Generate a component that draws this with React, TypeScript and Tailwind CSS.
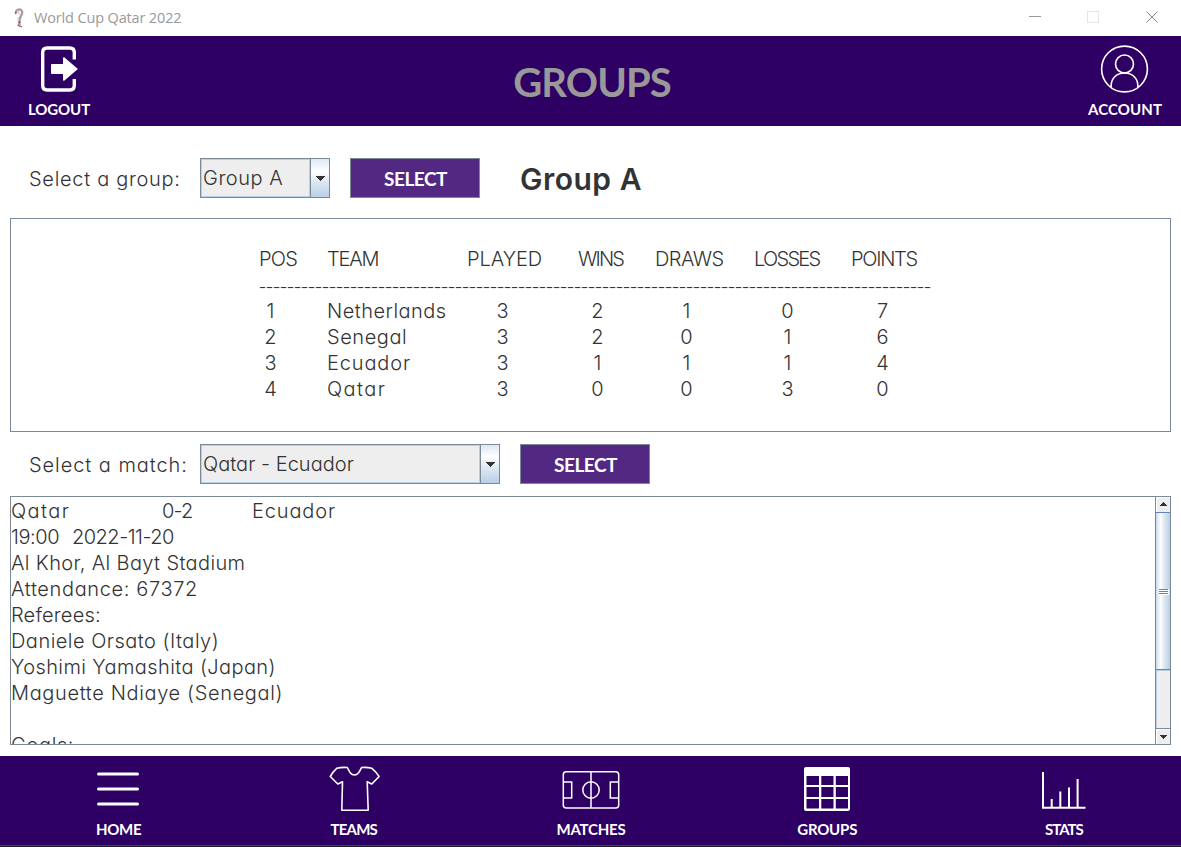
import React from "react";

const light = "font-['Inter',sans-serif] font-light text-[20px] leading-[26px] text-[#333333] [font-feature-settings:'cv11'] whitespace-pre";
const bold = "font-['Lato',sans-serif] font-bold text-white whitespace-nowrap";

function TrophyIcon() {
  return (
    <svg width="10" height="20" viewBox="0 0 10 20" fill="none" className="shrink-0">
      <path d="M2 5C2 .6 8.200 .4 8.200 4.500C8.300 7 6.200 8 6 10.500C6 12 4.800 13 5.200 15.500L6 19" stroke="#a8a3a3" strokeWidth="2.400" />
      <path d="M3.500 2.500L5.500 6.500M1 5.500L3 6M4 9L4.200 13" stroke="#d5d0d0" strokeWidth="1.300" />
      <path d="M1.200 5.500L2.200 4M5 13.500L6.400 15.200M6.600 18L7.600 19.200M3.600 17.600L4.600 16.800" stroke="#8f1f3c" strokeWidth="1.100" />
    </svg>
  );
}

function LogoutIcon() {
  return (
    <svg width="40" height="48" viewBox="39 45 40 48" className="block">
      <path d="M74.300 59.500V52.500Q74.300 48 69.800 48H47.200Q42.700 48 42.700 52.500V85.500Q42.700 90 47.200 90H69.800Q74.300 90 74.300 85.500V79" fill="none" stroke="#fff" strokeWidth="3.400" />
      <path d="M52 64H63V57.800Q63.500 57 64.500 57.600L77.900 69L64.500 80.400Q63.500 81 63 80.200V74H52Q51 74 51 73V65Q51 64 52 64Z" fill="#fff" />
    </svg>
  );
}

function AccountIcon() {
  return (
    <svg width="50" height="50" viewBox="0.500 0 50 50" fill="none" stroke="#fff" strokeWidth="1.600" className="block">
      <circle cx="25" cy="25" r="22.900" />
      <circle cx="25" cy="20" r="9" />
      <path d="M11.600 43.500V42C11.600 34 17.500 29 25 29S38.400 34 38.400 42V43.500" />
    </svg>
  );
}

function HomeIcon() {
  return (
    <svg width="44" height="36" viewBox="0 0 44 36" stroke="#fff" strokeWidth="3" strokeLinecap="round">
      <path d="M2.500 3H41.500M2.500 18H41.500M2.500 33H41.500" />
    </svg>
  );
}

function ShirtIcon() {
  return (
    <svg width="52" height="46" viewBox="329 765 52 46" fill="none" stroke="#fff" strokeWidth="1.600" strokeLinejoin="round">
      <path d="M336.700 767.300Q342 766 347.300 766.500C349.500 771 351 774 354.500 774S359.300 771 361.500 766.500Q367 766 371.900 767.300Q376 770.500 379.100 775.500L371.800 783L367.200 780.700L368.200 809.300H341.800L342.500 780.700L337.800 783L330.300 775.500Q333 770.500 336.700 767.300Z" />
    </svg>
  );
}

function PitchIcon() {
  return (
    <svg width="58" height="40" viewBox="562 770 58 40" fill="none" stroke="#fff" strokeWidth="1.500">
      <rect x="563.300" y="771.700" width="55.400" height="36.300" rx="3" />
      <path d="M591 772V808M563.500 782H571.700V798H563.500M618.500 782H610.300V798H618.500" />
      <circle cx="591" cy="790" r="8.200" />
    </svg>
  );
}

function TableIcon() {
  return (
    <svg width="46" height="44" viewBox="804 767 46 44">
      <path fill="#fff" fillRule="evenodd" d="M806 767H848Q850 767 850 769V809Q850 811 848 811H806Q804 811 804 809V769Q804 767 806 767ZM806.500 776V785H819V776ZM821.300 776V785H833.500V776ZM835.800 776V785H848V776ZM806.500 787V797H819V787ZM821.300 787V797H833.500V787ZM835.800 787V797H848V787ZM806.500 799V808.500H819V799ZM821.300 799V808.500H833.500V799ZM835.800 799V808.500H848V799Z" />
    </svg>
  );
}

function StatsIcon() {
  return (
    <svg width="44" height="38" viewBox="1042 772 44 38" fill="none" stroke="#fff" strokeWidth="2">
      <path d="M1043 772V807.800H1085.500M1051.700 807V799M1060.300 807V791.500M1069 807V787.500M1077.600 807V779" />
    </svg>
  );
}

const navItems = [
  { label: "HOME", text: "tracking-[-0.300px] pl-[1px]", box: "pt-[2px]", icon: <HomeIcon /> },
  { label: "TEAMS", text: "tracking-[-0.800px] pr-[1px]", box: "pt-[2px] pl-[1px]", icon: <ShirtIcon /> },
  { label: "MATCHES", text: "tracking-[-0.200px] pl-[1px]", box: "pt-[4px] pl-[1px]", icon: <PitchIcon /> },
  { label: "GROUPS", text: "tracking-[-0.200px] pl-[1px]", box: "pt-[2px] pl-[1px]", icon: <TableIcon /> },
  { label: "STATS", text: "tracking-[-1.000px] pl-[2px]", box: "pt-[6px] pl-[2px]", icon: <StatsIcon /> },
];

function ComboBox({ value, width, tracking }: { value: string; width: string; tracking: string }) {
  return (
    <div className={`flex h-10 border border-[#7a8a99] ${width}`}>
      <div className="flex flex-1 items-center border border-[#b8cfe5] bg-[#eeeeee] pl-[1px]">
        <span className={`${light} ${tracking}`}>{value}</span>
      </div>
      <div className="flex w-[19px] items-center justify-center border-l border-[#7a8a99] bg-[linear-gradient(#dde8f3_0%,#ffffff_32%,#dde8f3_60%,#b8cfe5_100%)] pr-[1px] pt-[1px]">
        <svg width="10" height="5" viewBox="0 0 10 5" shapeRendering="crispEdges"><path d="M0 0H10L5 5Z" fill="#333" /></svg>
      </div>
    </div>
  );
}

function SelectButton() {
  return (
    <button className={`${bold} ml-5 flex h-10 w-[130px] items-center justify-center border border-[#7a8a99] bg-[#522882] pl-[1px] pt-[2px] text-[19px] tracking-[-0.500px]`}>SELECT</button>
  );
}

const rows = [
  ["1", "Netherlands", "3", "2", "1", "0", "7"],
  ["2", "Senegal", "3", "2", "0", "1", "6"],
  ["3", "Ecuador", "3", "1", "1", "1", "4"],
  ["4", "Qatar", "3", "0", "0", "3", "0"],
];
const headings = ["POS", "TEAM", "PLAYED", "WINS", "DRAWS", "LOSSES", "POINTS"];
const headTracking = ["tracking-[-0.700px]", "tracking-[-1.200px]", "tracking-[-0.060px]", "tracking-[-1.800px]", "tracking-[-0.560px]", "tracking-[-1.720px]", "tracking-[-1.280px]"];
const teamTracking = ["tracking-[0.480px]", "tracking-[0.560px]", "tracking-[0.850px]", "tracking-[1.400px]"];
const indents = ["pl-[1.5px]", "", "pl-[25.5px]", "pl-[9.5px]", "pl-[21.5px]", "pl-[23.5px]", "pl-[21.500px]"];
const gridCols = "grid grid-cols-[68px_140px_111px_77px_99px_97px_81px]";

const details: [string, string][] = [
  ["Al Khor, Al Bayt Stadium", "tracking-[0.360px]"],
  ["Attendance: 67372", "tracking-[0.630px]"],
  ["Referees:", "tracking-[0.200px]"],
  ["Daniele Orsato (Italy)", "tracking-[0.480px]"],
  ["Yoshimi Yamashita (Japan)", "tracking-[0.400px]"],
  ["Maguette Ndiaye (Senegal)", "tracking-[0.640px]"],
  [" ", ""],
  ["Goals:", "tracking-[0.620px]"],
];

function ScrollBar() {
  return (
    <div className="flex w-[15px] shrink-0 flex-col border-l border-[#7a8a99] bg-[#eeeeee]">
      <div className="flex h-[15px] items-center justify-center border-l border-t border-white pb-[2px] pr-[2px]">
        <svg width="8" height="4" viewBox="0 0 8 4" shapeRendering="crispEdges"><path d="M0 4H8L4 0Z" fill="#333" /></svg>
      </div>
      <div className="-ml-px flex h-[158px] flex-col items-center justify-center border border-r-0 border-[#6382bf] bg-[linear-gradient(90deg,#c8dbee_0%,#ffffff_32%,#dde8f3_60%,#b8cfe5_100%)] pt-[2px]">
        <div className="ml-[2px] flex h-[6px] w-[10px] flex-col gap-px border-b border-r border-white bg-white">
          <div className="h-px bg-[#6382bf]" />
          <div className="h-px bg-[#6382bf]" />
          <div className="h-px bg-[#6382bf]" />
        </div>
      </div>
      <div className="flex-1 border-l border-t border-[#b8cfe5]" />
      <div className="flex h-4 items-center justify-center border-t border-[#7a8a99] pr-[1px] shadow-[inset_1px_1px_0_#fff]">
        <svg width="8" height="4" viewBox="0 0 8 4" shapeRendering="crispEdges"><path d="M0 0H8L4 4Z" fill="#333" /></svg>
      </div>
    </div>
  );
}

export default function App() {
  return (
    <div className="flex h-[847px] w-[1181px] flex-col overflow-hidden bg-white">
      <div className="flex h-9 items-center pl-[14px]">
        <TrophyIcon />
        <span className="ml-[10px] flex-1 whitespace-nowrap font-['Open_Sans',sans-serif] text-[14.5px] tracking-[-0.150px] text-[#999999]">World Cup Qatar 2022</span>
        <svg width="132" height="14" viewBox="1028 10 132 14" fill="none" className="mr-[21px] mb-[2px]">
          <path d="M1029 16.500H1041" stroke="#999" />
          <rect x="1087.500" y="11.500" width="11" height="11" stroke="#e6e6e6" />
          <path d="M1146.500 11.500L1157.500 22.500M1157.500 11.500L1146.500 22.500" stroke="#888" />
        </svg>
      </div>

      <header className="flex h-[90px] items-start justify-between bg-[#2f0063]">
        <div className="flex w-[118px] flex-col items-center pt-[9px]">
          <LogoutIcon />
          <span className={`${bold} mt-[6px] text-[15px] leading-[20px] tracking-[-0.100px]`}>LOGOUT</span>
        </div>
        <h1 className="mt-[16px] pr-[2px] font-['Lato',sans-serif] text-[40px] font-bold leading-[60px] tracking-[-0.900px] text-[#999999]">GROUPS</h1>
        <div className="flex w-[113px] flex-col items-center pt-2">
          <AccountIcon />
          <span className={`${bold} mt-[5px] pl-[1px] text-[15px] leading-[20px] tracking-[0.100px]`}>ACCOUNT</span>
        </div>
      </header>

      <main className="flex h-[630px] flex-col px-[10px]">
        <div className="mt-8 flex h-10 items-center">
          <span className={`${light} w-[190px] pl-[19px] pt-[2px] tracking-[0.700px]`}>Select a group:</span>
          <ComboBox value="Group A" width="w-[130px]" tracking="tracking-[0.550px]" />
          <SelectButton />
          <h2 className="ml-[40px] mt-[1px] font-['Inter',sans-serif] text-[30px] font-semibold leading-[36px] tracking-[0.500px] text-[#333333]">Group A</h2>
        </div>

        <section className="mt-5 h-[214px] w-[1161px] border border-[#7a8a99] pl-[248px] pt-[27px]">
          <div className={gridCols}>
            {headings.map((h, i) => <span key={h} className={`${light} ${headTracking[i]}`}>{h}</span>)}
          </div>
          <div className="h-[26px] w-[674px] whitespace-nowrap font-['Open_Sans',sans-serif] text-[22px] font-light leading-[26px] tracking-[-0.080px] text-[#333333]">{"-".repeat(96)}</div>
          {rows.map((row, r) => (
            <div key={row[1]} className={gridCols}>
              {row.map((cell, i) => i === 1
                ? <span key={i} className={`${light} ${teamTracking[r]}`}>{cell}</span>
                : <div key={i} className={indents[i]}><div className={`${light} w-5 text-center`}>{cell}</div></div>)}
            </div>
          ))}
        </section>

        <div className="mt-3 flex h-10 items-center">
          <span className={`${light} w-[190px] pl-[19px] pt-[2px] tracking-[0.940px]`}>Select a match:</span>
          <ComboBox value="Qatar - Ecuador" width="w-[300px]" tracking="tracking-[0.020px]" />
          <SelectButton />
        </div>

        <section className="mt-3 flex h-[249px] w-[1161px] border border-[#7a8a99]">
          <div className="h-[247px] flex-1 overflow-hidden pt-[1px]">
            <div className="flex">
              <span className={`${light} w-[151px] tracking-[1.400px]`}>Qatar</span>
              <span className={`${light} w-[90px] tracking-[-0.870px]`}>0-2</span>
              <span className={`${light} tracking-[0.850px]`}>Ecuador</span>
            </div>
            <div className="flex">
              <span className={`${light} w-[61px] tracking-[-0.400px]`}>19:00</span>
              <span className={`${light} tracking-[-0.510px]`}>2022-11-20</span>
            </div>
            {details.map(([text, tracking], i) => <div key={i} className={`${light} ${tracking}`}>{text}</div>)}
          </div>
          <ScrollBar />
        </section>
      </main>

      <nav className="grid h-[89px] grid-cols-5 bg-[#2f0063]">
        {navItems.map((item) => (
          <div key={item.label} className="flex flex-col items-center">
            <div className={`flex h-[63px] items-center ${item.box}`}>{item.icon}</div>
            <span className={`${bold} text-[15px] leading-[20px] ${item.text}`}>{item.label}</span>
          </div>
        ))}
      </nav>
      <div className="h-[2px] border-t border-[#444444] bg-[#1e1e1e]" />
    </div>
  );
}
